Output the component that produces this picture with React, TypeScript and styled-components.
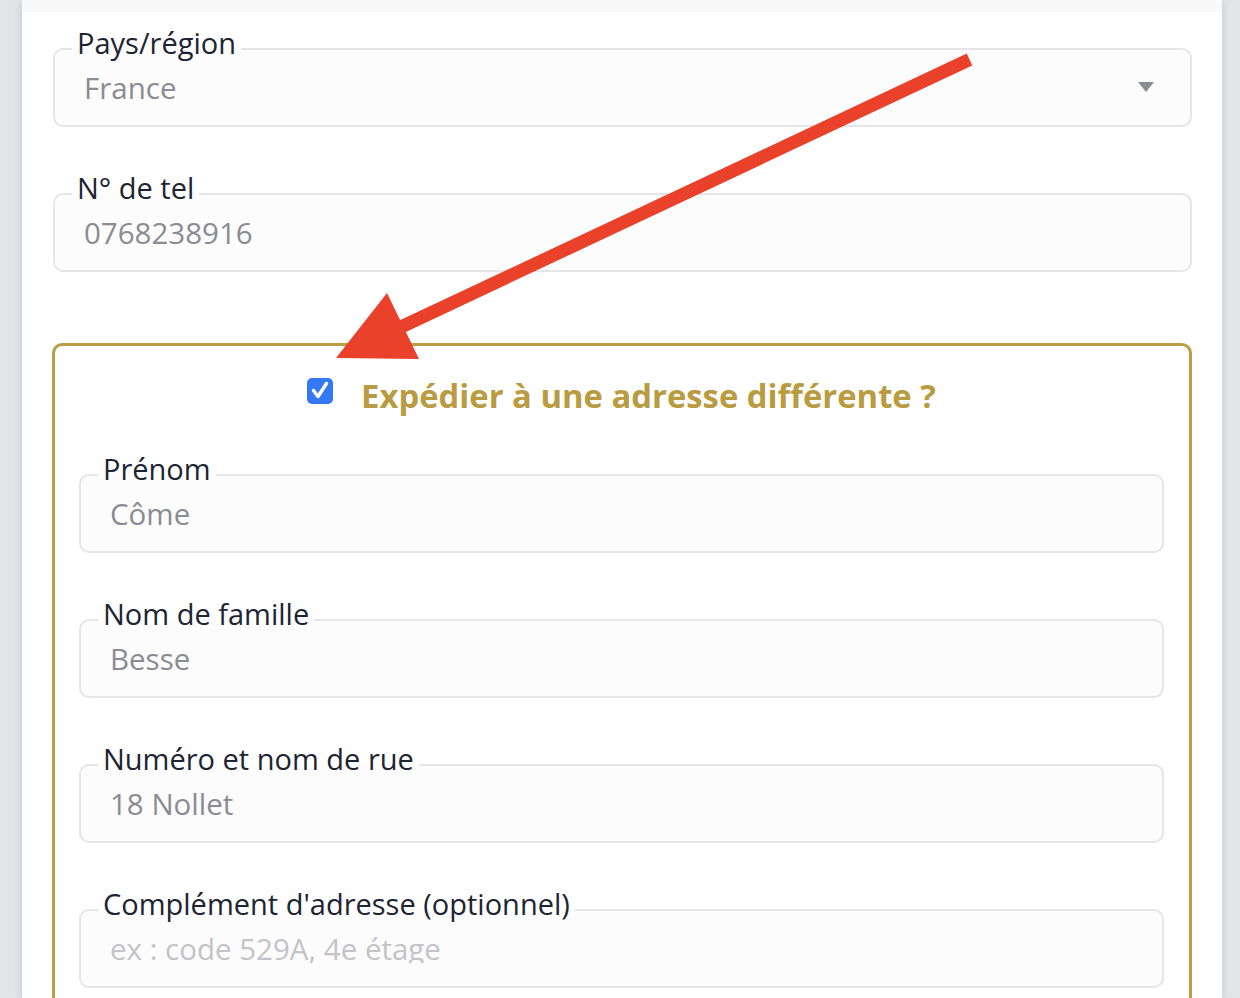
import styled, { createGlobalStyle } from "styled-components";

const GlobalStyle = createGlobalStyle`
  html, body {
    margin: 0;
    padding: 0;
    height: 100%;
    overflow: hidden;
  }
  body {
    background: #e2e5e8;
    font-family: "Open Sans", "Noto Sans", sans-serif;
  }
`;

const Page = styled.div`
  position: relative;
  width: 1240px;
  height: 998px;
  overflow: hidden;
  display: flex;
  padding-left: 22px;
  box-sizing: border-box;
`;

const Panel = styled.main`
  width: 1200px;
  background: #fff;
  box-shadow: 0 0 8px rgba(0, 0, 0, 0.14);
  display: flex;
  flex-direction: column;
`;

const TopStrip = styled.div`
  height: 12px;
  flex-shrink: 0;
  background: #f9f9fa;
`;

const Form = styled.form`
  padding: 14px 30px 0 31px;
  display: flex;
  flex-direction: column;
  gap: 44px;
`;

const FieldSet = styled.fieldset`
  margin: 0;
  padding: 0 0 23px;
  min-inline-size: 0;
  border: 2px solid #e6e6e8;
  border-radius: 10px;
  background: #fcfcfc;
`;

const Legend = styled.legend`
  margin-left: 17px;
  padding: 0 5px 12px;
  font-size: 29px;
  line-height: 34px;
  color: #1d2433;
`;

const Input = styled.input`
  display: block;
  box-sizing: border-box;
  width: 100%;
  height: 30px;
  margin: 0;
  padding: 0 29px;
  border: none;
  outline: none;
  background: transparent;
  font-family: inherit;
  font-size: 29.5px;
  color: #8a8b93;

  &::placeholder {
    color: #c3c3c8;
  }
`;

const Select = styled.div`
  display: flex;
  align-items: center;
  justify-content: space-between;
  height: 30px;
  padding: 0 36px 0 29px;
  font-size: 29.5px;
  color: #8a8b93;
`;

const Caret = styled.svg`
  width: 16px;
  height: 10px;
  fill: #8a8b93;
`;

const ShippingBox = styled.section`
  margin-top: 27px;
  margin-left: -1px;
  padding: 30px 25px 40px 24px;
  border: 3px solid #bb9d45;
  border-radius: 10px;
  display: flex;
  flex-direction: column;
  gap: 44px;
`;

const ToggleRow = styled.label`
  display: flex;
  justify-content: center;
  gap: 28px;
  height: 40px;
  margin-bottom: -8px;
`;

const CheckBox = styled.span<{ $checked: boolean }>`
  width: 26px;
  height: 26px;
  margin-top: 2px;
  border-radius: 5px;
  background: ${(p) => (p.$checked ? "#3478f6" : "#fff")};
  display: flex;
`;

const ToggleText = styled.span`
  font-size: 32.8px;
  line-height: 40px;
  font-weight: 700;
  color: #b99b42;
`;

type FieldProps = {
  label: string;
  value?: string;
  placeholder?: string;
};

function Field({ label, value, placeholder }: FieldProps) {
  return (
    <FieldSet>
      <Legend>{label}</Legend>
      <Input defaultValue={value} placeholder={placeholder} readOnly />
    </FieldSet>
  );
}

function App() {
  return (
    <Page>
      <GlobalStyle />
      <Panel>
        <TopStrip />
        <Form onSubmit={(e) => e.preventDefault()}>
          <FieldSet>
            <Legend>Pays/région</Legend>
            <Select>
              France
              <Caret viewBox="0 0 16 10">
                <polygon points="0,0 16,0 8,10" />
              </Caret>
            </Select>
          </FieldSet>
          <Field label="N° de tel" value="0768238916" />

          <ShippingBox>
            <ToggleRow>
              <CheckBox $checked>
                <svg width="26" height="26" viewBox="0 0 26 26">
                  <path
                    d="M6.5 12.5 L11 18.5 L19.5 5.5"
                    fill="none"
                    stroke="#fff"
                    strokeWidth="3.5"
                    strokeLinecap="round"
                    strokeLinejoin="round"
                  />
                </svg>
              </CheckBox>
              <ToggleText>Expédier à une adresse différente ?</ToggleText>
            </ToggleRow>
            <Field label="Prénom" value="Côme" />
            <Field label="Nom de famille" value="Besse" />
            <Field label="Numéro et nom de rue" value="18 Nollet" />
            <Field
              label="Complément d'adresse (optionnel)"
              placeholder="ex : code 529A, 4e étage"
            />
          </ShippingBox>
        </Form>
      </Panel>

      <Annotation width="1240" height="998" viewBox="0 0 1240 998">
        <line x1="969.5" y1="59.5" x2="401" y2="327" stroke="#e9412a" strokeWidth="13" />
        <polygon points="336,358 387,293 419,359" fill="#e9412a" />
      </Annotation>
    </Page>
  );
}

const Annotation = styled.svg`
  position: absolute;
  left: 0;
  top: 0;
  pointer-events: none;
`;

export default App;
